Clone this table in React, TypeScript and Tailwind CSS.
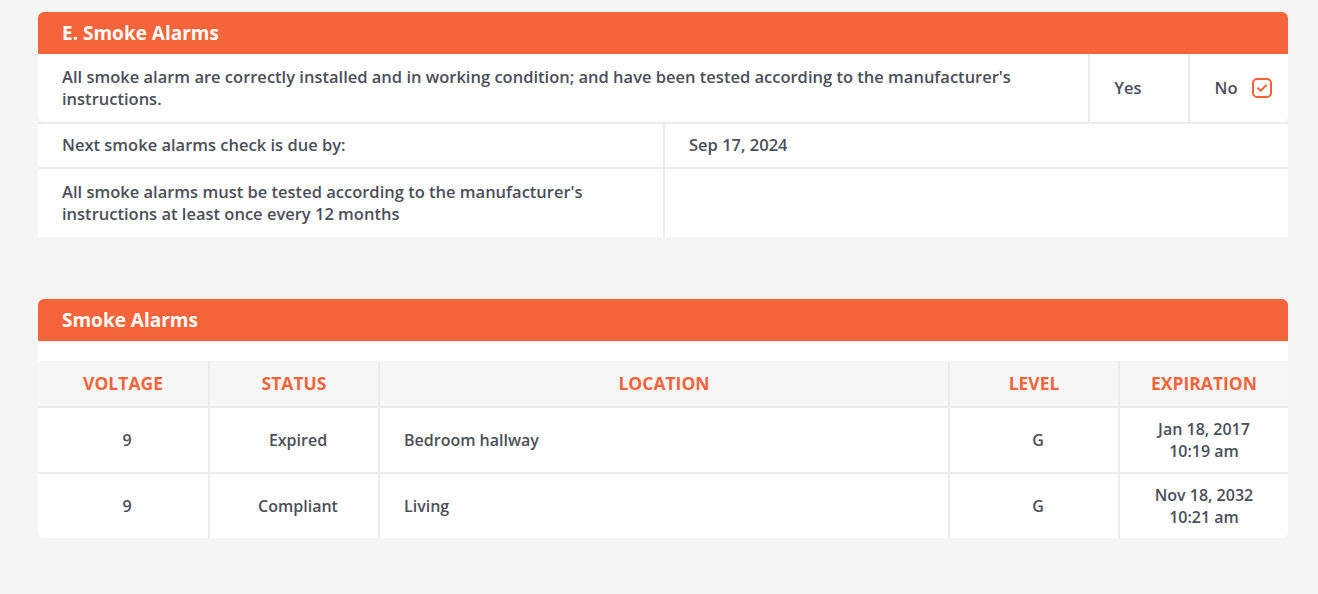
import React from "react";

const font = { fontFamily: "'Open Sans', 'Noto Sans', sans-serif" };

function CheckIcon() {
  return (
    <svg width="20" height="20" viewBox="0 0 20 20" fill="none">
      <rect x="1" y="1" width="18" height="18" rx="4" stroke="#f5633b" strokeWidth="2" />
      <path d="M6 10.2l2.6 2.6L14 7.5" stroke="#f5633b" strokeWidth="2" strokeLinecap="round" strokeLinejoin="round" />
    </svg>
  );
}

export default function App() {
  const rows = [
    { v: "9", s: "Expired", l: "Bedroom hallway", lv: "G", d: "Jan 18, 2017", t: "10:19 am" },
    { v: "9", s: "Compliant", l: "Living", lv: "G", d: "Nov 18, 2032", t: "10:21 am" },
  ];
  return (
    <div className="min-h-[594px] w-full bg-[#f5f5f5] pt-3 text-[#4b4f5a]" style={font}>
      <div className="mx-[38px] w-[1250px]">
        {/* Section E */}
        <div className="rounded-md bg-white">
          <div className="flex h-[42px] items-center rounded-t-md bg-[#f6643c] px-6 text-[19px] font-bold text-white">
            E. Smoke Alarms
          </div>
          <div className="flex h-[68px] text-[16.5px] font-semibold">
            <div className="flex flex-1 items-center px-6 leading-[22px]">
              All smoke alarm are correctly installed and in working condition; and have been tested according to the manufacturer's instructions.
            </div>
            <div className="flex w-[100px] items-center justify-center border-l-2 border-[#ececec] pr-[22px]">Yes</div>
            <div className="flex w-[100px] items-center justify-center gap-[14px] border-l-2 border-[#ececec] pl-2">
              <span>No</span>
              <CheckIcon />
            </div>
          </div>
        </div>
        <div className="border-t-2 border-[#ececec] bg-white text-[16.5px] font-semibold">
          <div className="flex h-[45px] border-b-2 border-[#ececec]">
            <div className="flex w-[625px] items-center px-6">Next smoke alarms check is due by:</div>
            <div className="flex flex-1 items-center border-l-2 border-[#ececec] px-6">Sep 17, 2024</div>
          </div>
          <div className="flex h-[68px]">
            <div className="flex w-[625px] items-center px-6 leading-[22px]">
              All smoke alarms must be tested according to the manufacturer's instructions at least once every 12 months
            </div>
            <div className="flex-1 border-l-2 border-[#ececec]"></div>
          </div>
        </div>

        {/* Smoke alarms table */}
        <div className="mt-[62px] rounded-md bg-white">
          <div className="flex h-[42px] items-center rounded-t-md bg-[#f6643c] px-6 text-[19px] font-bold text-white">
            Smoke Alarms
          </div>
          <div className="h-[20px] bg-white"></div>
          <div className="grid grid-cols-[170px_170px_570px_170px_170px] text-[17.5px] font-bold uppercase text-[#f6643c]">
            <div className="flex h-[47px] items-center justify-center border-b-2 border-[#ececec] bg-[#f7f7f7]">Voltage</div>
            <div className="flex h-[47px] items-center justify-center border-b-2 border-l-2 border-[#ececec] bg-[#f7f7f7]">Status</div>
            <div className="flex h-[47px] items-center justify-center border-b-2 border-l-2 border-[#ececec] bg-[#f7f7f7]">Location</div>
            <div className="flex h-[47px] items-center justify-center border-b-2 border-l-2 border-[#ececec] bg-[#f7f7f7]">Level</div>
            <div className="flex h-[47px] items-center justify-center border-b-2 border-l-2 border-[#ececec] bg-[#f7f7f7]">Expiration</div>
          </div>
          {rows.map((r, i) => (
            <div
              key={i}
              className={`grid grid-cols-[170px_170px_570px_170px_170px] text-[16px] font-semibold ${i === 0 ? "border-b-2 border-[#ececec]" : ""}`}
            >
              <div className="flex h-[64px] items-center justify-center pl-2">{r.v}</div>
              <div className="flex h-[64px] items-center justify-center border-l-2 border-[#ececec] pl-2">{r.s}</div>
              <div className="flex h-[64px] items-center border-l-2 border-[#ececec] px-6">{r.l}</div>
              <div className="flex h-[64px] items-center justify-center border-l-2 border-[#ececec] pl-2">{r.lv}</div>
              <div className="flex h-[64px] flex-col items-center justify-center border-l-2 border-[#ececec] text-[16px] leading-[22px]">
                <span>{r.d}</span>
                <span>{r.t}</span>
              </div>
            </div>
          ))}
        </div>
      </div>
    </div>
  );
}
